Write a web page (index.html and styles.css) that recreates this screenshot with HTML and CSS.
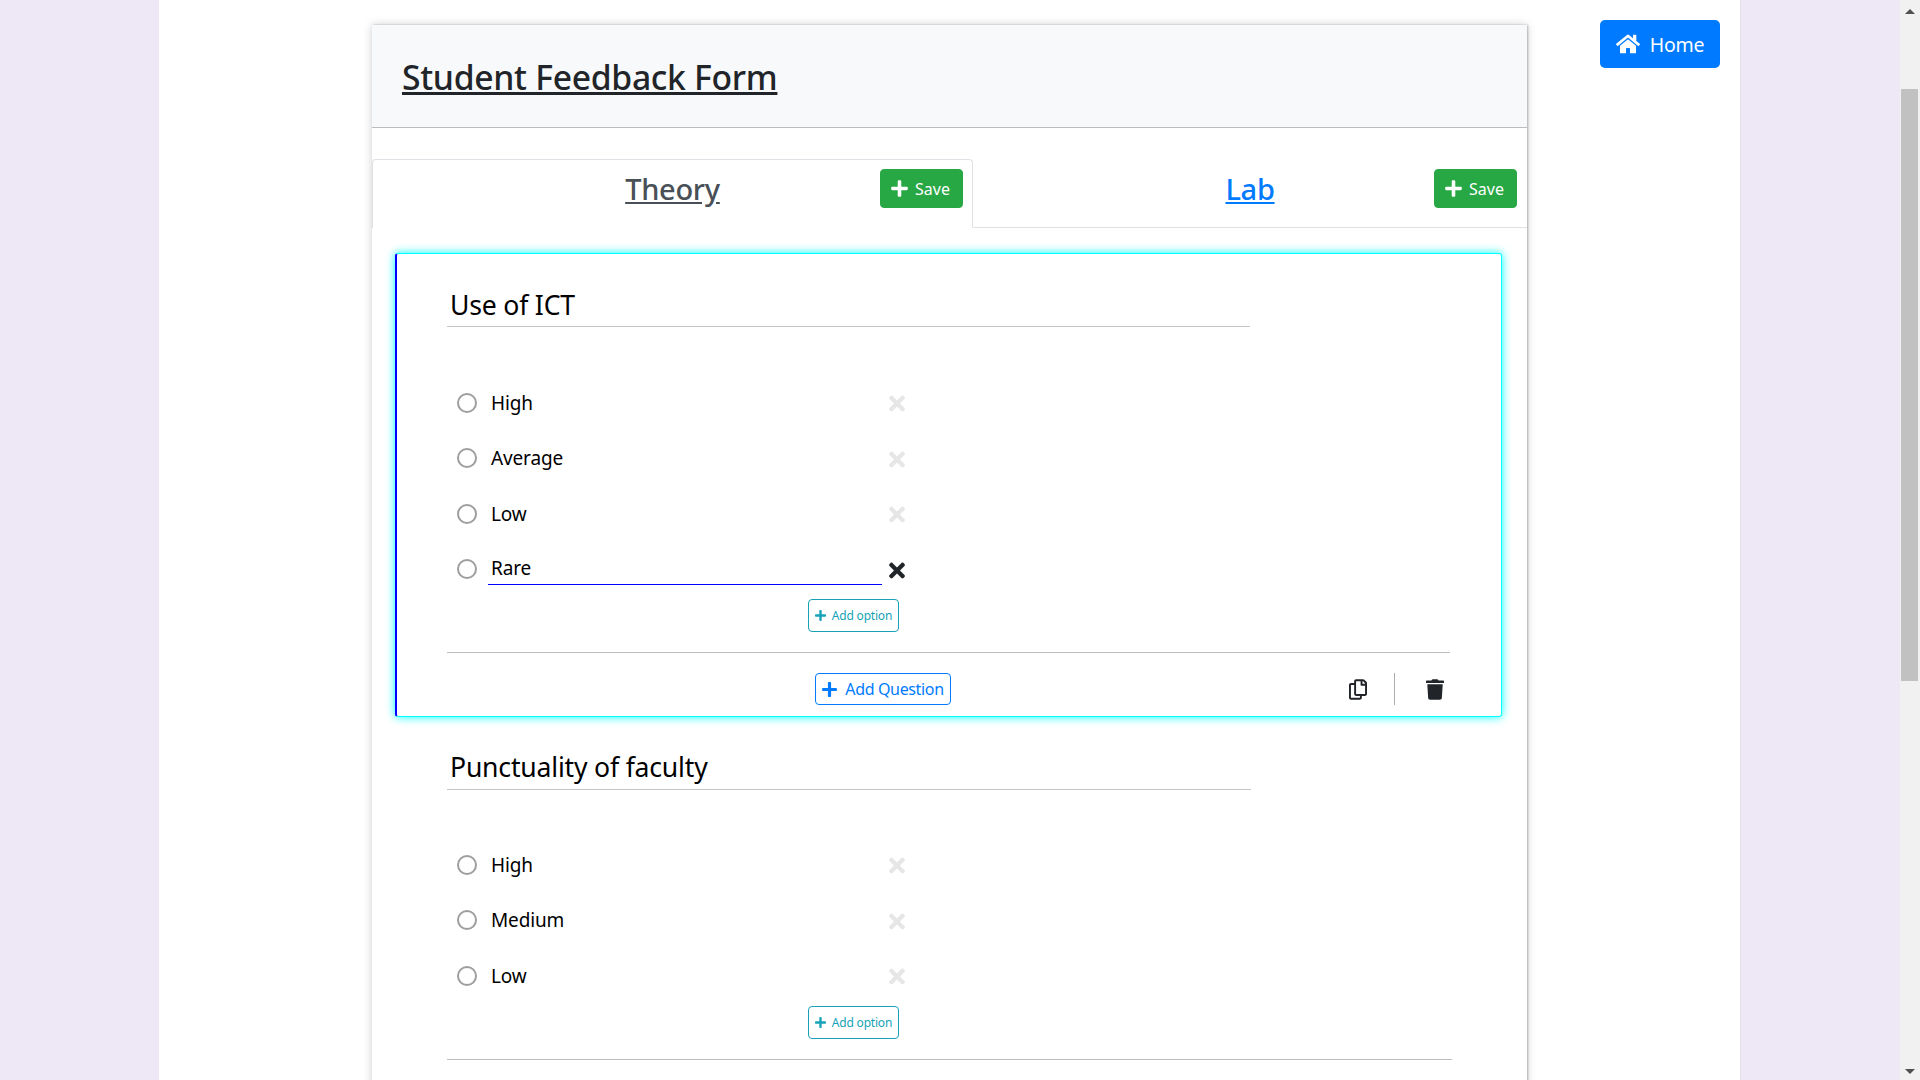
FILE: index.html
```html
<!DOCTYPE html>
<html lang="en">
<head>
    <meta charset="UTF-8">
    <title>Student Feedback Form</title>
    <link rel="stylesheet" href="styles.css">
</head>
<body>
    <svg class="sprites" xmlns="http://www.w3.org/2000/svg">
        <symbol id="i-plus" viewBox="0 0 448 512"><path d="M416 208H272V64c0-17.67-14.33-32-32-32h-32c-17.67 0-32 14.33-32 32v144H32c-17.67 0-32 14.33-32 32v32c0 17.67 14.33 32 32 32h144v144c0 17.67 14.33 32 32 32h32c17.67 0 32-14.33 32-32V304h144c17.67 0 32-14.33 32-32v-32c0-17.67-14.33-32-32-32z"/></symbol>
        <symbol id="i-times" viewBox="0 0 352 512"><path d="M242.72 256l100.07-100.07c12.28-12.28 12.28-32.19 0-44.48l-22.24-22.24c-12.28-12.28-32.19-12.28-44.48 0L176 189.28 75.93 89.21c-12.28-12.28-32.19-12.28-44.48 0L9.21 111.45c-12.28 12.28-12.28 32.19 0 44.48L109.28 256 9.21 356.07c-12.28 12.28-12.28 32.19 0 44.48l22.24 22.24c12.28 12.28 32.2 12.28 44.48 0L176 322.72l100.07 100.07c12.28 12.28 32.2 12.28 44.48 0l22.24-22.24c12.28-12.28 12.28-32.19 0-44.48L242.72 256z"/></symbol>
        <symbol id="i-home" viewBox="0 0 576 512"><path d="M280.37 148.26L96 300.11V464a16 16 0 0 0 16 16l112.06-.29a16 16 0 0 0 15.92-16V368a16 16 0 0 1 16-16h64a16 16 0 0 1 16 16v95.64a16 16 0 0 0 16 16.05L464 480a16 16 0 0 0 16-16V300L295.67 148.26a12.19 12.19 0 0 0-15.3 0zM571.6 251.47L488 182.56V44.05a12 12 0 0 0-12-12h-56a12 12 0 0 0-12 12v72.61L318.47 43a48 48 0 0 0-61 0L4.34 251.47a12 12 0 0 0-1.6 16.9l25.5 31A12 12 0 0 0 45.15 301l235.22-193.74a12.19 12.19 0 0 1 15.3 0L530.9 301a12 12 0 0 0 16.9-1.6l25.5-31a12 12 0 0 0-1.7-16.93z"/></symbol>
        <symbol id="i-trash" viewBox="0 0 448 512"><path d="M432 32H312l-9.4-18.7A24 24 0 0 0 281.1 0H166.8a23.72 23.72 0 0 0-21.4 13.3L136 32H16A16 16 0 0 0 0 48v32a16 16 0 0 0 16 16h416a16 16 0 0 0 16-16V48a16 16 0 0 0-16-16zM53.2 467a48 48 0 0 0 47.9 45h245.8a48 48 0 0 0 47.9-45L416 128H32z"/></symbol>
        <symbol id="i-copy" viewBox="0 0 448 512"><path d="M433.941 65.941l-51.882-51.882A48 48 0 0 0 348.118 0H176c-26.51 0-48 21.49-48 48v48H48c-26.51 0-48 21.49-48 48v320c0 26.51 21.49 48 48 48h224c26.51 0 48-21.49 48-48v-48h80c26.51 0 48-21.49 48-48V99.882a48 48 0 0 0-14.059-33.941zM266 464H54a6 6 0 0 1-6-6V150a6 6 0 0 1 6-6h74v224c0 26.51 21.49 48 48 48h96v42a6 6 0 0 1-6 6zm128-96H182a6 6 0 0 1-6-6V54a6 6 0 0 1 6-6h106v88c0 13.255 10.745 24 24 24h88v202a6 6 0 0 1-6 6zm6-256h-64V48h9.632c1.591 0 3.117.632 4.243 1.757l48.368 48.368a6 6 0 0 1 1.757 4.243V112z"/></symbol>
    </svg>

    <div class="page">
        <div class="container">
            <div class="form-card">
                <div class="form-header">
                    <h2 class="form-title">Student Feedback Form</h2>
                </div>

                <div class="tabs">
                    <div class="tab tab-active">
                        <a class="tab-link" href="#">Theory</a>
                        <button class="btn-save"><svg class="ic-save"><use href="#i-plus"/></svg>Save</button>
                    </div>
                    <div class="tab tab-lab">
                        <a class="tab-link" href="#">Lab</a>
                        <button class="btn-save"><svg class="ic-save"><use href="#i-plus"/></svg>Save</button>
                    </div>
                </div>

                <div class="questions">
                    <section class="question question-active">
                        <div class="q-title">Use of ICT</div>
                        <div class="options">
                            <div class="option"><span class="radio"></span><span class="opt-text">High</span><svg class="ic-x"><use href="#i-times"/></svg></div>
                            <div class="option"><span class="radio"></span><span class="opt-text">Average</span><svg class="ic-x"><use href="#i-times"/></svg></div>
                            <div class="option"><span class="radio"></span><span class="opt-text">Low</span><svg class="ic-x"><use href="#i-times"/></svg></div>
                            <div class="option option-focus"><span class="radio"></span><span class="opt-text">Rare</span><svg class="ic-x"><use href="#i-times"/></svg></div>
                        </div>
                        <button class="btn-option"><svg class="ic-option"><use href="#i-plus"/></svg>Add option</button>
                        <div class="q-footer">
                            <button class="btn-question"><svg class="ic-question"><use href="#i-plus"/></svg>Add Question</button>
                            <div class="q-actions">
                                <svg class="ic-copy"><use href="#i-copy"/></svg>
                                <span class="q-sep"></span>
                                <svg class="ic-trash"><use href="#i-trash"/></svg>
                            </div>
                        </div>
                    </section>

                    <section class="question">
                        <div class="q-title">Punctuality of faculty</div>
                        <div class="options">
                            <div class="option"><span class="radio"></span><span class="opt-text">High</span><svg class="ic-x"><use href="#i-times"/></svg></div>
                            <div class="option"><span class="radio"></span><span class="opt-text">Medium</span><svg class="ic-x"><use href="#i-times"/></svg></div>
                            <div class="option"><span class="radio"></span><span class="opt-text">Low</span><svg class="ic-x"><use href="#i-times"/></svg></div>
                        </div>
                        <button class="btn-option"><svg class="ic-option"><use href="#i-plus"/></svg>Add option</button>
                        <div class="q-footer"></div>
                    </section>
                </div>
            </div>

            <a class="btn-home" href="#"><svg class="ic-home"><use href="#i-home"/></svg>Home</a>
        </div>
    </div>

    <div class="scrollbar">
        <span class="sb-arrow sb-up"></span>
        <div class="sb-track"><div class="sb-thumb"></div></div>
        <span class="sb-arrow sb-down"></span>
    </div>
</body>
</html>
```

FILE: styles.css
```css
/* base */
* { box-sizing: border-box; }

body {
    margin: 0;
    height: 1080px;
    overflow: hidden;
    display: flex;
    font-family: "Noto Sans", "Open Sans", sans-serif;
    color: #000;
}

svg { fill: currentColor; display: block; flex: none; }
.sprites { display: none; }
button { font-family: inherit; background: none; padding: 0; cursor: pointer; }

/* page shell */
.page {
    flex: 1;
    height: 1080px;
    padding: 0 159px;
    background: #ede7f6;
}

.container {
    height: 1080px;
    padding: 20px 0 0 213px;
    display: flex;
    align-items: flex-start;
    background: #fff;
    border-right: 1px solid #e4e0ea;
    overflow: hidden;
}

.form-card {
    width: 1155px;
    height: 1200px;
    margin-top: 5px;
    flex: none;
    background: #fff;
    box-shadow: 1px 0 2px rgba(0, 0, 0, 0.25), 0 0 9px rgba(0, 0, 0, 0.18);
}

/* header */
.form-header {
    height: 103px;
    padding: 2px 30px 0;
    display: flex;
    align-items: center;
    background: #f8f9fa;
    border-bottom: 1px solid #bdbdbd;
}

.form-title {
    margin: 0;
    font-size: 33.7px;
    font-weight: 500;
    letter-spacing: -0.3px;
    color: #212529;
    text-decoration: underline;
}

/* tabs */
.tabs {
    display: flex;
    height: 69px;
    margin-top: 31px;
    border-bottom: 1px solid #dee2e6;
}

.tab {
    position: relative;
    height: 69px;
    display: flex;
    align-items: center;
    justify-content: center;
    padding-bottom: 10px;
}

.tab-active {
    width: 601px;
    border: 1px solid #dee2e6;
    border-bottom-color: #fff;
    border-radius: 4px 4px 0 0;
    background: #fff;
}

.tab-lab { flex: 1; }

.tab-link {
    font-size: 29px;
    font-weight: 500;
    letter-spacing: -0.3px;
    color: #007bff;
    text-decoration: underline;
}

.tab-active .tab-link { color: #495057; }

.btn-save {
    position: absolute;
    top: 10px;
    right: 10px;
    width: 83px;
    height: 39px;
    padding-right: 2px;
    display: flex;
    align-items: center;
    justify-content: center;
    gap: 7px;
    font-size: 16px;
    color: #fff;
    background: #28a745;
    border: 1px solid #28a745;
    border-radius: 4px;
}

.tab-active .btn-save { top: 9px; right: 9px; }

.ic-save { width: 17px; height: 19px; }

/* questions */
.questions { padding: 25px 0 0 24px; }

.question {
    width: 1106px;
    border: 1px solid transparent;
    padding: 0 49px 0 50px;
}

.question-active {
    width: 1107px;
    height: 464px;
    margin: 0 0 -2px -1px;
    border: 1px solid #0ff;
    border-left: 2px solid #00f;
    border-radius: 3px;
    padding: 0 51px 0 50px;
    box-shadow: 0 0 10px #0ff;
}

.q-title {
    width: 804px;
    height: 74px;
    padding: 33px 0 0 3px;
    font-size: 26.6px;
    letter-spacing: -0.2px;
    line-height: 36px;
    border-bottom: 1px solid #c4c4c4;
}

.question-active .q-title { width: 803px; height: 73px; }

.options { margin-top: 47px; }
.question-active .options { margin-top: 48px; }

.option {
    display: flex;
    align-items: center;
    height: 55.5px;
    padding-left: 10px;
}

.radio {
    width: 20px;
    height: 20px;
    flex: none;
    border: 2px solid #9e9e9e;
    border-radius: 50%;
}

.opt-text {
    width: 394px;
    height: 34px;
    margin-left: 11px;
    padding-left: 3px;
    font-size: 19px;
    line-height: 34px;
    letter-spacing: -0.15px;
    flex: none;
}

.option-focus .opt-text {
    align-self: flex-start;
    margin-top: 9.5px;
    border-bottom: 1px solid #00f;
}

.ic-x { width: 16px; height: 23px; margin-left: 7px; margin-top: 2px; color: #e6e6e6; }
.option-focus .ic-x { color: #212529; }

.btn-option {
    display: flex;
    align-items: center;
    justify-content: center;
    gap: 6px;
    width: 91px;
    height: 33px;
    margin: 2px 0 0 361px;
    font-size: 12px;
    letter-spacing: -0.2px;
    color: #17a2b8;
    background: #fff;
    border: 1px solid #17a2b8;
    border-radius: 4px;
}

.ic-option { width: 11px; height: 13px; }

.q-footer {
    display: flex;
    align-items: flex-start;
    margin-top: 20px;
    padding: 20px 6px 0 368px;
    border-top: 1px solid #bdbdbd;
}

.btn-question {
    display: flex;
    align-items: center;
    justify-content: center;
    gap: 8px;
    width: 136px;
    height: 32px;
    font-size: 16px;
    letter-spacing: -0.35px;
    color: #007bff;
    background: #fff;
    border: 1px solid #007bff;
    border-radius: 4px;
}

.ic-question { width: 15px; height: 17px; }

.q-actions {
    display: flex;
    align-items: center;
    margin-left: auto;
    height: 32px;
    color: #212529;
}

.ic-copy { width: 18px; height: 21px; }
.q-sep { width: 1px; height: 32px; margin: 0 31px 0 27px; background: #adadad; }
.ic-trash { width: 18px; height: 21px; }

/* home button */
.btn-home {
    display: flex;
    align-items: center;
    justify-content: center;
    gap: 10px;
    width: 120px;
    height: 48px;
    margin-left: 73px;
    flex: none;
    font-size: 19.5px;
    letter-spacing: -0.2px;
    color: #fff;
    background: #007bff;
    border-radius: 5px;
    text-decoration: none;
}

.ic-home { width: 24px; height: 22px; }

/* window scrollbar */
.scrollbar {
    width: 20px;
    height: 1080px;
    flex: none;
    display: flex;
    flex-direction: column;
    background: #f1f1f1;
}

.sb-arrow {
    height: 17px;
    flex: none;
    display: flex;
    align-items: center;
    justify-content: center;
}

.sb-arrow::before {
    content: "";
    border-left: 5px solid transparent;
    border-right: 5px solid transparent;
}

.sb-up::before { border-bottom: 5px solid #505050; margin-top: 6px; }
.sb-down::before { border-top: 5px solid #505050; }

.sb-track { flex: 1; padding: 72px 2px 0 1px; }
.sb-thumb { height: 592px; background: #c1c1c1; }
```
